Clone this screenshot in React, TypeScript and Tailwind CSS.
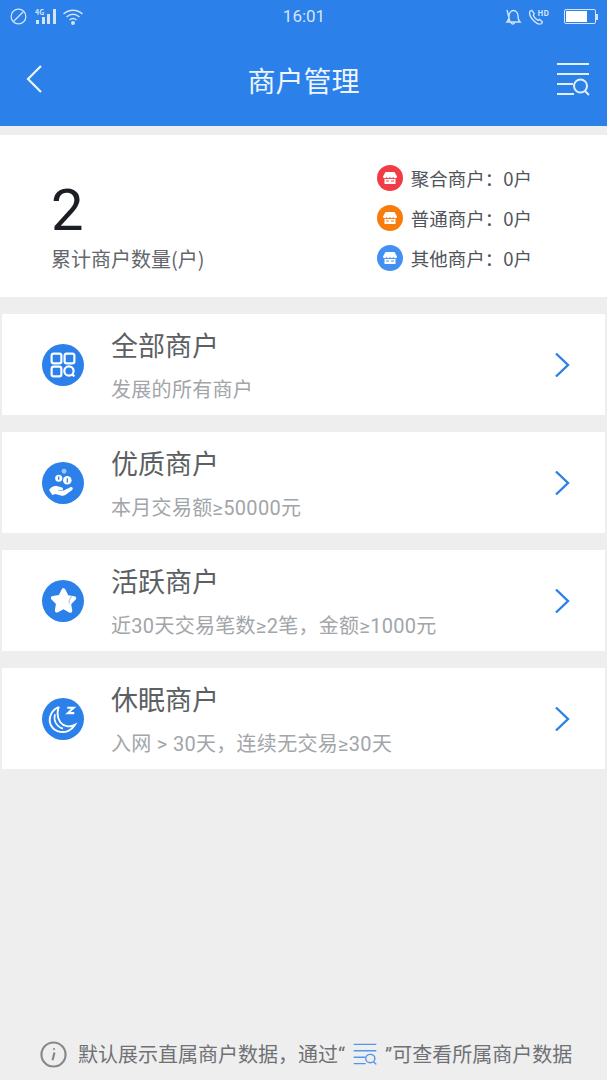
import type { ReactNode } from 'react'

const font = { fontFamily: '"Noto Sans CJK SC", Roboto, sans-serif' }
const latinFirst = { fontFamily: 'Roboto, "Noto Sans CJK SC", sans-serif' }

function ListSearchIcon({ className }: { className: string }) {
  return (
    <svg viewBox="0 0 34 34" preserveAspectRatio="none" fill="none" stroke="currentColor" strokeWidth="2" className={className}>
      <path d="M1 2h32M1 12h32M1 22h16M1 32h17" />
      <circle cx="24.5" cy="24" r="6.5" />
      <path d="M29 29l4 4" />
    </svg>
  )
}

function StoreIcon() {
  return (
    <svg viewBox="0 0 16 16" className="w-4 h-4" fill="#fff">
      <path d="M3.5 2h9L15 6.5a1.8 1.8 0 0 1-3.5.6 2 2 0 0 1-3.5 0 2 2 0 0 1-3.5 0A1.8 1.8 0 0 1 1 6.5z" />
      <path fillRule="evenodd" d="M2.5 9h11v5h-11zM4 10.5v1h3v-1zM9 10.5v1h3v-1z" />
    </svg>
  )
}

function GridIcon() {
  return (
    <svg viewBox="0 0 24 24" className="w-[26px] h-[26px]" fill="none" stroke="#fff" strokeWidth="2">
      <rect x="1.5" y="1.5" width="9" height="9" rx="2" />
      <rect x="13.500" y="1.500" width="9" height="9" rx="2" />
      <rect x="1.500" y="13.500" width="9" height="9" rx="2" />
      <circle cx="17.500" cy="17.500" r="4.300" />
      <path d="M20.500 20.500l2 2" />
    </svg>
  )
}

function HandCoinsIcon() {
  return (
    <svg viewBox="0 0 28 28" className="w-[30px] h-[30px]" fill="#fff">
      <circle cx="15" cy="3" r="2.300" opacity=".55" />
      <circle cx="10" cy="9.500" r="3.300" />
      <circle cx="18" cy="11.500" r="4" />
      <path d="M1 20.500c2-3 5-4.500 8-3.500l4 1.200c1.500.4 1.500 2.300-.2 2.300H9.500v.6h5l6-3c2-1 3.600 1 2 2.400L16.500 25c-1.500.9-3 1-4.500.6L7 24.300l-3 1z" />
      <path d="M10 8v3M18 9.500v4" stroke="#2b80ea" strokeWidth="1.200" />
    </svg>
  )
}

function StarIcon() {
  return (
    <svg viewBox="0 0 28 28" className="w-[33px] h-[33px]">
      <path
        d="M14 3.500c.8 0 1.300.5 1.700 1.300l2.300 4.700 5.200.8c1.700.3 2.200 1.900 1 3.100l-3.700 3.700.9 5.200c.3 1.700-1.100 2.700-2.600 1.900L14 21.500l-4.700 2.500c-1.500.8-2.900-.2-2.600-1.900l.9-5.200-3.700-3.700c-1.200-1.200-.7-2.800 1-3.100l5.200-.8 2.300-4.700c.4-.8.900-1.300 1.600-1.300z"
        fill="#fff"
      />
      <path d="M21 10.500c-1.500 1.500-2.300 3.500-2.300 6" fill="none" stroke="#a9cdf7" strokeWidth="1" />
    </svg>
  )
}

function MoonIcon() {
  return (
    <svg viewBox="0 0 28 28" className="w-[30px] h-[30px]" fill="none" stroke="#fff">
      <path d="M10 3C3.500 5.500 .5 12 2 18c2 7 10.500 10 17 7 2.500-1 4.500-3 6-5.500-5 2.500-10.500 1.500-13.500-2.500-2.500-3.500-3.300-9-1.500-14.500z" strokeWidth="1.800" />
      <path d="M6.500 9.500c-1.500 5.500 1 11.500 7.500 13.500" strokeWidth="1.500" />
      <path d="M18 3.500h6l-5.500 5H24.500" strokeWidth="1.900" />
    </svg>
  )
}

function ChevronRight() {
  return (
    <svg viewBox="0 0 16 26" className="w-4 h-[26px]" fill="none" stroke="#2b80ea" strokeWidth="2.400">
      <path d="M2 1.500L14 13 2 24.500" />
    </svg>
  )
}

function StatusBar() {
  return (
    <div className="h-[32px] pt-[1px] flex items-center justify-between pl-[10px] pr-[9px] text-[#d3e5fb]">
      <div className="flex items-center gap-[5px] w-[200px]">
        <svg viewBox="0 0 18 18" className="w-[17px] h-[17px]" fill="none" stroke="currentColor" strokeWidth="1.300">
          <circle cx="9" cy="9" r="7.800" />
          <path d="M4 14L14 4" />
        </svg>
        <svg viewBox="0 0 22 18" className="w-[22px] h-[18px] ml-[3px]" fill="currentColor">
          <rect x="1" y="12" width="3" height="4" />
          <rect x="7" y="9" width="3" height="7" />
          <rect x="12" y="6" width="3" height="10" />
          <rect x="18" y="1" width="3" height="15" />
          <text x="0" y="7" fontSize="7" fontWeight="700" style={font}>4G</text>
        </svg>
        <svg viewBox="0 0 22 18" className="w-[22px] h-[18px]" fill="none" stroke="currentColor" strokeWidth="1.500">
          <path d="M1.500 6C7 1 15 1 20.500 6M4.500 9c4-3.300 9-3.300 13 0M7.500 12c2-1.600 5-1.600 7 0" />
          <circle cx="11" cy="15" r="1.200" fill="currentColor" />
        </svg>
      </div>
      <span className="text-[17px] leading-none" style={{ fontFamily: 'Roboto, sans-serif' }}>16:01</span>
      <div className="flex items-center justify-end w-[200px]">
        <svg viewBox="0 0 18 18" className="w-[18px] h-[18px] mr-[6px]" fill="none" stroke="currentColor" strokeWidth="1.400">
          <path d="M3 14c1.500-1.500 2-3 2-6s2-5.500 4.500-5.500S14 5 14 8s.5 4.500 2 6zM7 14.500c.3 2 3 2 3.500 0M3 2l3 12" />
        </svg>
        <svg viewBox="0 0 26 18" className="w-[25px] h-[18px] mr-[11px]" fill="none" stroke="currentColor" strokeWidth="1.400">
          <path d="M2 3c-1 3 1 7 4 10s6 4 8 3l1-2-3-2.500-1.500 1c-2-1-4-3-5-5l1-2L4 2z" />
          <text x="10" y="8" fontSize="8" fontWeight="700" fill="currentColor" stroke="none" style={font}>HD</text>
        </svg>
        <div className="flex items-center">
          <div className="w-[32px] h-[15px] border border-[#d3e5fb] rounded-[2px] p-[1px]">
            <div className="w-[21px] h-full bg-white" />
          </div>
          <div className="w-[2px] h-[6px] bg-[#d3e5fb]" />
        </div>
      </div>
    </div>
  )
}

function Legend({ color, label }: { color: string; label: string }) {
  return (
    <div className="flex items-center h-[26px] gap-[8px]">
      <div className={`w-[26px] h-[26px] rounded-full flex items-center justify-center ${color}`}>
        <StoreIcon />
      </div>
      <span className="text-[18.5px] leading-none text-[#50545a]">{label}</span>
    </div>
  )
}

function MerchantRow({ icon, title, desc }: { icon: ReactNode; title: string; desc: string }) {
  return (
    <div className="h-[101px] bg-white flex items-center pl-[40px] pr-[35px] mx-[2px]">
      <div className="w-[42px] h-[42px] rounded-full bg-[#2b80ea] flex items-center justify-center shrink-0">
        {icon}
      </div>
      <div className="ml-[27px] flex-1 pt-[3px]">
        <div className="text-[27px] leading-[34px] text-[#5c5f63]">{title}</div>
        <div className="text-[20px] leading-[28px] mt-[14px] tracking-[0.3px] text-[#a2a5a9]" style={latinFirst}>{desc}</div>
      </div>
      <ChevronRight />
    </div>
  )
}

export default function App() {
  return (
    <div className="w-[607px] h-[1080px] bg-[#eeeeee] flex flex-col overflow-hidden" style={font}>
      {/* Header */}
      <div className="h-[126px] bg-[#2b80ea] shrink-0">
        <StatusBar />
        <div className="h-[94px] flex items-center justify-between pl-[25px] pr-[17px]">
          <svg viewBox="0 0 18 30" className="w-[18px] h-[30px] mr-[8px]" fill="none" stroke="#eef5fe" strokeWidth="2.200">
            <path d="M16 2L3 15l13 13" />
          </svg>
          <span className="text-[28px] leading-none text-[#eef5fe] pt-[2px]">商户管理</span>
          <ListSearchIcon className="w-[34px] h-[34px] text-[#e3effd]" />
        </div>
      </div>

      {/* Summary */}
      <div className="mt-[9px] h-[162px] bg-white flex items-center justify-between pl-[51px] pr-[75px] shrink-0">
        <div className="pt-[21px]">
          <div className="text-[58px] leading-[60px] text-[#1b1e24]" style={{ fontFamily: 'Roboto, sans-serif', fontWeight: 400 }}>2</div>
          <div className="text-[20px] leading-[28px] mt-[5px] text-[#63666b]">累计商户数量(户)</div>
        </div>
        <div className="flex flex-col gap-[14px] pt-[4px]">
          <Legend color="bg-[#f23c45]" label="聚合商户：0户" />
          <Legend color="bg-[#f87c0c]" label="普通商户：0户" />
          <Legend color="bg-[#4290f2]" label="其他商户：0户" />
        </div>
      </div>

      {/* Merchant categories */}
      <div className="mt-[17px] flex flex-col gap-[17px] shrink-0">
        <MerchantRow icon={<GridIcon />} title="全部商户" desc="发展的所有商户" />
        <MerchantRow icon={<HandCoinsIcon />} title="优质商户" desc="本月交易额≥50000元" />
        <MerchantRow icon={<StarIcon />} title="活跃商户" desc="近30天交易笔数≥2笔，金额≥1000元" />
        <MerchantRow icon={<MoonIcon />} title="休眠商户" desc="入网 > 30天，连续无交易≥30天" />
      </div>

      {/* Footer note */}
      <div className="mt-auto h-[52px] flex items-center pl-[40px] shrink-0 text-[20px] text-[#6f7175] whitespace-nowrap" style={latinFirst}>
        <svg viewBox="0 0 28 28" className="w-[27px] h-[27px] mr-[11px] shrink-0" fill="none" stroke="#85878a" strokeWidth="2.200">
          <circle cx="14" cy="14" r="12.500" />
          <path d="M15 12l-2 8M14.500 7.500v1.500" />
        </svg>
        <span className="pt-[2px]">默认展示直属商户数据，通过“</span>
        <ListSearchIcon className="w-[24px] h-[22px] ml-[8px] mr-[8px] text-[#4f97ec] shrink-0" />
        <span className="pt-[2px]">”可查看所属商户数据</span>
      </div>
    </div>
  )
}
